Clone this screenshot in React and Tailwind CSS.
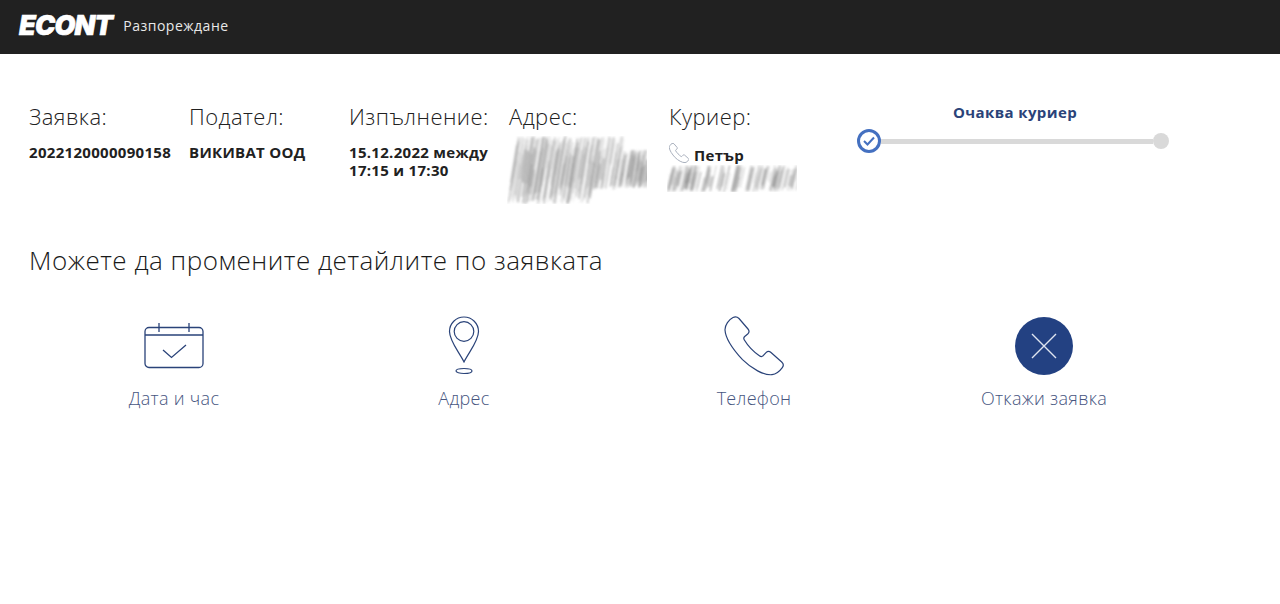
import React from "react";

const detalles = [
  { titulo: "Заявка:", valor: "2022120000090158" },
  { titulo: "Подател:", valor: "ВИКИВАТ ООД" },
  { titulo: "Изпълнение:", valor: "15.12.2022 между 17:15 и 17:30" },
];

// trazos inclinados para la zona borrosa de los datos ocultos
const buildStreaks = (width, height, count, seed, profile) => {
  const streaks = [];
  let s = seed;
  const rnd = () => {
    s = (s * 9301 + 49297) % 233280;
    return s / 233280;
  };
  for (let i = 0; i < count; i++) {
    const x = rnd() * width;
    const [top, bottom] = profile(x);
    const span = bottom - top;
    const len = span * (0.35 + rnd() * 0.65);
    const y1 = top + rnd() * (span - len);
    const inMiddle = (y1 + len / 2) / height > 0.4 && (y1 + len / 2) / height < 0.7;
    streaks.push({
      x,
      top: y1,
      bottom: y1 + len,
      tone: inMiddle ? 125 + Math.floor(rnd() * 60) : 175 + Math.floor(rnd() * 50),
      opacity: 0.15 + rnd() * 0.35,
      w: 0.8 + rnd() * 1.8,
    });
  }
  return streaks;
};

const Smear = ({ width, height, count, seed, profile, slant, id }) => {
  const streaks = buildStreaks(width, height, count, seed, profile);
  return (
    <svg width={width} height={height} viewBox={`0 0 ${width} ${height}`} className="block">
      <defs>
        <filter id={id} x="-5%" y="-5%" width="110%" height="110%">
          <feGaussianBlur stdDeviation="0.85" />
        </filter>
        <clipPath id={`${id}-clip`}>
          <rect width={width} height={height} />
        </clipPath>
      </defs>
      <g clipPath={`url(#${id}-clip)`}>
        <g filter={`url(#${id})`}>
          {streaks.map((t, i) => (
            <line
              key={i}
              x1={t.x + slant * ((height - t.top) / height)}
              y1={t.top}
              x2={t.x + slant * ((height - t.bottom) / height)}
              y2={t.bottom}
              stroke={`rgb(${t.tone},${t.tone},${t.tone})`}
              strokeOpacity={t.opacity}
              strokeWidth={t.w}
            />
          ))}
        </g>
      </g>
    </svg>
  );
};

const addressProfile = (x) => {
  if (x < 82) return [0, 68];
  if (x < 108) return [0, 54];
  return [14, 52];
};

const CalendarIcon = () => (
  <svg width="60" height="48" viewBox="0 0 60 48" fill="none" stroke="#2a4379" strokeWidth="1.3">
    <rect x="1" y="4.5" width="58" height="40" rx="4" />
    <path d="M1 12h58M15 0v9M45 0v9" />
    <path d="M19 27l8.5 7.5L42 22" />
  </svg>
);

const PinIcon = () => (
  <svg width="32" height="60" viewBox="0 0 32 60" fill="none" stroke="#2a4379" strokeWidth="1.2">
    <path d="M16 46C11 36 1.5 25 1.5 15.5a14.5 14.5 0 0 1 29 0C30.500 25 21 36 16 46z" />
    <circle cx="16" cy="15.500" r="9.800" />
    <ellipse cx="16" cy="55" rx="8" ry="2.500" />
  </svg>
);

const PhoneIcon = ({ size = 60, color = "#2a4379", stroke = 1.2 }) => (
  <svg width={size} height={size} viewBox="0 0 60 60" fill="none" stroke={color} strokeWidth={stroke}>
    <path d="M9 1.500c2-1 4.500-.5 6 1l9 10.500c1.500 1.800 1.300 3.500-.3 5l-3 2.500c-1 .9-1.200 2-.5 3.200 3.500 5.800 10 12.500 15.500 16.300 1.300.9 2.500 .8 3.500-.3l2.800-3c1.500-1.500 3.200-1.700 5-.2l10.700 9.500c1.800 1.600 2 3.800 .6 5.700-2.200 3-5.500 6.500-10.300 7-8 .8-20.500-6-29.500-15C9.500 34 1.500 22.500 1 14 .8 9 5 3.500 9 1.500z" />
  </svg>
);

const acciones = [
  { label: "Дата и час", icon: <div className="pt-[7px] pb-[5px]"><CalendarIcon /></div> },
  { label: "Адрес", icon: <PinIcon /> },
  { label: "Телефон", icon: <PhoneIcon /> },
  {
    label: "Откажи заявка",
    icon: (
      <div className="w-[58px] h-[58px] rounded-full bg-[#234182] flex items-center justify-center">
        <svg width="26" height="26" viewBox="0 0 26 26" stroke="#dfe5f0" strokeWidth="1.4">
          <path d="M1 1l24 24M25 1L1 25" />
        </svg>
      </div>
    ),
  },
];

const App = () => {
  return (
    <div className="min-h-[604px] bg-white font-['Open_Sans',sans-serif] text-[#212121]">
      <header className="h-[54px] bg-[#212121] flex items-center pl-[19px] pb-[4px]">
        <span className="font-['Inter',sans-serif] font-black italic text-[27px] leading-none tracking-[-0.8px] text-white [-webkit-text-stroke:0.6px_white]">
          ECONT
        </span>
        <span className="ml-[11px] text-[14px] font-normal tracking-[0.5px] text-[#e8e8e8]">Разпореждане</span>
      </header>

      <main className="pl-[29px] pt-[46px]">
        <section className="flex">
          {detalles.map((d) => (
            <div key={d.titulo} className="w-[160px]">
              <h2 className="text-[22px] leading-[32px] font-light tracking-[0.45px] whitespace-nowrap">{d.titulo}</h2>
              <p className="mt-[11px] text-[15px] leading-[18px] font-bold tracking-[0.3px] pr-[2px]">{d.valor}</p>
            </div>
          ))}

          <div className="w-[160px]">
            <h2 className="text-[22px] leading-[32px] font-light tracking-[0.45px]">Адрес:</h2>
            <div className="mt-[4px] -ml-[2px]">
              <Smear id="blur-adr" width={140} height={68} count={260} seed={17} slant={11} profile={addressProfile} />
            </div>
          </div>

          <div className="w-[188px]">
            <h2 className="text-[22px] leading-[32px] font-light tracking-[0.45px]">Куриер:</h2>
            <div className="mt-[11px] flex items-center h-[20px]">
              <PhoneIcon size={20} color="#a9b0bd" stroke={3} />
              <span className="ml-[5px] mt-[4px] text-[15px] font-bold tracking-[0.3px] leading-[18px]">Петър</span>
            </div>
            <div className="mt-[2px] -ml-[2px]">
              <Smear id="blur-cur" width={130} height={27} count={170} seed={43} slant={6} profile={() => [0, 27]} />
            </div>
          </div>

          <div className="w-[316px] pt-[2px]">
            <p className="text-center text-[15px] leading-[20px] font-bold tracking-[0.4px] text-[#2a4379]">
              Очаква куриер
            </p>
            <div className="mt-[7px] flex items-center w-[312px]">
              <div className="w-[24px] h-[24px] shrink-0 rounded-full border-[3px] border-[#4470c0] bg-white flex items-center justify-center">
                <svg width="12" height="10" viewBox="0 0 12 10" fill="none" stroke="#4470c0" strokeWidth="2">
                  <path d="M1 5l3.500 3.500L11 1.500" />
                </svg>
              </div>
              <div className="flex-1 h-[5px] bg-[#d9d9d9]" />
              <div className="w-[16px] h-[16px] shrink-0 rounded-full bg-[#d9d9d9]" />
            </div>
          </div>
        </section>

        <h1 className="mt-[38px] text-[26px] leading-[36px] font-light tracking-[0.5px] text-[#1a1a1a]">Можете да промените детайлите по заявката</h1>

        <section className="mt-[38px] grid grid-cols-4 w-[1160px]">
          {acciones.map((a) => (
            <div key={a.label} className="flex flex-col items-center">
              <div className="h-[60px] flex items-center justify-center">{a.icon}</div>
              <span className="mt-[10px] text-[18px] leading-[24px] font-light tracking-[0.3px] text-[#47567f]">{a.label}</span>
            </div>
          ))}
        </section>
      </main>
    </div>
  );
};

export default App;
